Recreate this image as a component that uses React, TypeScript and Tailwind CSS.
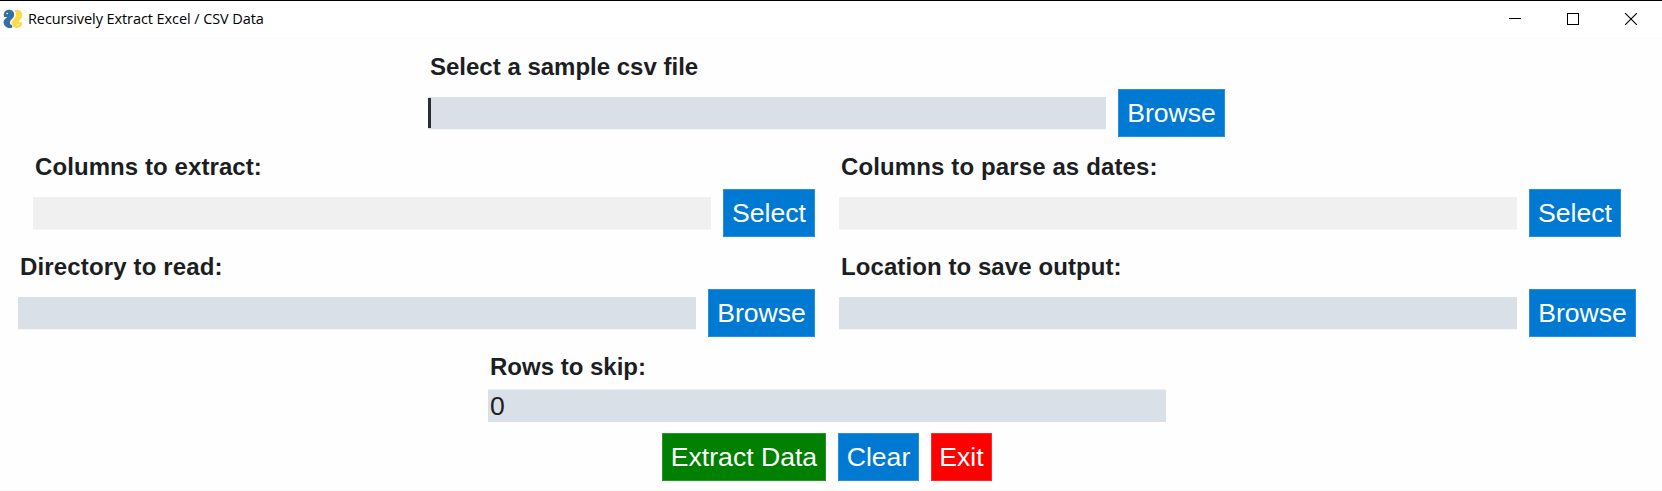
import type { ReactNode } from "react";

const BUTTON_TONES = {
  blue: "bg-[#0079d3] border-[#2b8fdb]",
  green: "bg-[#008000] border-[#2b952b]",
  red: "bg-[#ff0000] border-[#ff2b2b]",
};

function Button({
  children,
  width,
  tone = "blue",
}: {
  children: ReactNode;
  width: string;
  tone?: keyof typeof BUTTON_TONES;
}) {
  return (
    <button
      className={`flex h-12 shrink-0 items-center justify-center border text-[26.6px] leading-none whitespace-nowrap text-white ${BUTTON_TONES[tone]} ${width}`}
    >
      {children}
    </button>
  );
}

function Label({ children, tracking = "" }: { children: ReactNode; tracking?: string }) {
  return (
    <div
      className={`h-10 pt-0.5 pl-0.5 text-[24px] leading-[32px] font-bold whitespace-nowrap text-[#1c1e23] ${tracking}`}
    >
      {children}
    </div>
  );
}

function Field({
  label,
  action,
  actionWidth,
  tracking,
  disabled = false,
  focused = false,
}: {
  label: string;
  action: string;
  actionWidth: string;
  tracking?: string;
  disabled?: boolean;
  focused?: boolean;
}) {
  return (
    <div className="flex flex-col">
      <Label tracking={tracking}>{label}</Label>
      <div className="flex h-12 items-center gap-3">
        <div
          className={`flex h-8 w-[678px] items-center shadow-[0_1px_0_#f3f5f7] ${disabled ? "bg-[#f0f0f0]" : "bg-[#dae0e8]"}`}
        >
          {focused && <span className="h-[30px] w-[3px] bg-[#2b2d31]" />}
        </div>
        <Button width={actionWidth}>{action}</Button>
      </div>
    </div>
  );
}

function Logo() {
  return (
    <svg width="20" height="20" viewBox="0 0 20 20" className="shrink-0">
      <path
        d="M.7 6.200C.6 3 3 .8 6 .8C9 .8 11.200 2.800 11.200 5.500C11.200 8 9.800 9.300 8.500 10.500C7.300 11.700 6.700 12.600 6.900 14C7.100 15.400 8 16 9.100 16L9.300 18.500C8 19.300 5.900 19.300 4.200 18.500C1.800 17.400.4 15.100.6 12.700C.8 10.900 2 9.900 3.200 8.900L4.200 7.900L1.200 8Z"
        fill="#33709f"
      />
      <path
        d="M19.300 6.200C19.300 3 17 .8 14 .8C12.900.8 11.900 1.100 11.200 1.600C12.500 3 13.100 4.800 12.700 6.800C12.300 8.700 11.100 9.900 9.900 11C8.700 12.200 8.400 13.900 9.100 15.700C10 18 12.200 19.200 14.500 18.900C17.300 18.500 19.300 16.200 19.300 13.400L15.900 13C15.900 11.900 16.400 11.200 17.300 10.200C18.600 8.900 19.300 7.900 19.300 6.200Z"
        fill="#ffd848"
      />
      <circle cx="4.200" cy="4.500" r=".8" fill="#fff" />
      <circle cx="14.800" cy="15.600" r=".8" fill="#fff" />
    </svg>
  );
}

function TitleBar() {
  return (
    <header className="flex h-[39px] items-center justify-between border-t border-b border-t-black border-b-[#fafafa] bg-white pb-0.5 pl-[3px]">
      <div className="flex items-center gap-[5px]">
        <Logo />
        <span className="font-['Open_Sans','Noto_Sans',sans-serif] text-[14.5px] leading-5 tracking-[-0.08px] whitespace-nowrap text-black">
          Recursively Extract Excel / CSV Data
        </span>
      </div>
      <div className="flex items-center gap-[46px] pr-[25px]">
        <svg width="12" height="12" shapeRendering="crispEdges">
          <path d="M0 5.500H12" stroke="#000" />
        </svg>
        <svg width="12" height="12" shapeRendering="crispEdges">
          <rect x=".5" y=".5" width="11" height="11" fill="none" stroke="#000" />
        </svg>
        <svg width="12" height="12">
          <path d="M0 0L12 12M12 0L0 12" stroke="#000" strokeWidth="1.100" />
        </svg>
      </div>
    </header>
  );
}

export default function App() {
  return (
    <div className="flex h-[491px] w-[1662px] flex-col overflow-hidden border-b border-[#f7f7f7] bg-[#fefefe] font-['Liberation_Sans',Arial,sans-serif]">
      <TitleBar />
      <main className="flex flex-col items-center pt-2.5 pr-2">
        <div className="flex h-[100px] justify-center pr-px">
          <Field label="Select a sample csv file" action="Browse" actionWidth="w-[107px]" focused />
        </div>
        <div className="flex h-[100px] justify-center gap-6">
          <Field
            label="Columns to extract:"
            action="Select"
            actionWidth="w-[92px]"
            tracking="tracking-[0.08px]"
            disabled
          />
          <Field
            label="Columns to parse as dates:"
            action="Select"
            actionWidth="w-[92px]"
            tracking="tracking-[0.12px]"
            disabled
          />
        </div>
        <div className="flex h-[100px] justify-center gap-6">
          <Field
            label="Directory to read:"
            action="Browse"
            actionWidth="w-[107px]"
            tracking="tracking-[0.15px]"
          />
          <Field
            label="Location to save output:"
            action="Browse"
            actionWidth="w-[107px]"
            tracking="tracking-[0.08px]"
          />
        </div>
        <div className="flex w-[678px] flex-col">
          <Label>Rows to skip:</Label>
          <div className="flex h-[33px] items-center border-t border-[#eef1f4] bg-[#dae0e8] pl-0.5 text-[26.6px] leading-8 text-[#1c1e23]">
            0
          </div>
        </div>
        <div className="mt-[11px] flex gap-3">
          <Button width="w-[164px]" tone="green">Extract Data</Button>
          <Button width="w-[81px]">Clear</Button>
          <Button width="w-[61px]" tone="red">Exit</Button>
        </div>
      </main>
    </div>
  );
}
